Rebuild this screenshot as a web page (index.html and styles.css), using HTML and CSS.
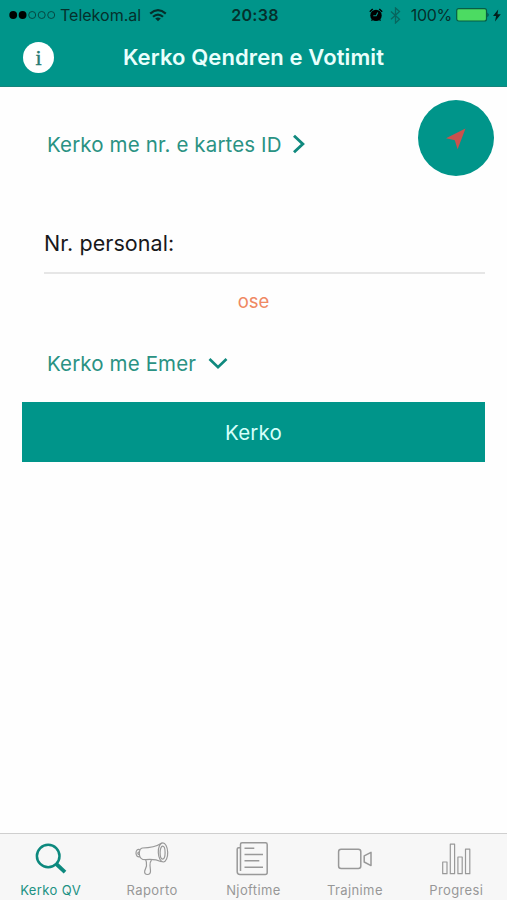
FILE: index.html
```html
<!DOCTYPE html>
<html lang="sq">
<head>
<meta charset="utf-8">
<title>Kerko Qendren e Votimit</title>
<link rel="stylesheet" href="styles.css">
</head>
<body>
<div class="app">
  <header class="header">
    <div class="status">
      <div class="status-left">
        <svg class="signal" width="47" height="10" viewBox="0 0 47 10"><circle cx="4.2" cy="5" r="3.9"/><circle cx="13.6" cy="5" r="3.9"/><g fill="none" stroke="#063f3a" stroke-width=".9"><circle cx="23.2" cy="5" r="3.5"/><circle cx="32.7" cy="5" r="3.5"/><circle cx="42.2" cy="5" r="3.5"/></g></svg>
        <span class="carrier">Telekom.al</span>
        <svg class="wifi" width="18" height="13" viewBox="0 0 18 13"><g fill="none" stroke="#052e2a" stroke-width="2.2"><path d="M1.2 4.6Q9-2.2 16.8 4.6"/><path d="M4 7.8Q9 3.3 14 7.8"/></g><path d="M9 12.3 6.2 9.5Q9 7.3 11.8 9.5Z" fill="#052e2a"/></svg>
      </div>
      <span class="time">20:38</span>
      <div class="status-right">
        <svg width="14" height="14" viewBox="0 0 14 14"><circle cx="7" cy="7.4" r="5.7"/><path d="M.8 3.8 3.7 1M13.2 3.8 10.3 1M3.3 11.6l-.8 1M10.7 11.6l.8 1" stroke="#000" stroke-width="1.5"/><path d="M8.8 4.5 7.2 7.8H4.3" fill="none" stroke="#00958a" stroke-width="1.1"/></svg>
        <svg class="bluetooth" width="11" height="17" viewBox="0 0 11 17"><path d="M1 4.6l8.5 7.6-4 3.8V1l4 3.6L1 12.2" fill="none" stroke="#08665e" stroke-width="1.3"/></svg>
        <span class="percent">100%</span>
        <svg class="battery" width="34" height="14" viewBox="0 0 34 14"><rect x=".7" y=".7" width="29.8" height="12.3" rx="2" fill="#4cdb62" stroke="#075e45" stroke-width="1.2"/><path d="M31.5 4.5q2.1 2.3 0 4.8z" fill="#053b35"/></svg>
        <svg class="bolt" width="8" height="13" viewBox="0 0 8 13"><path d="M5.2.5 0 7h3.1L2 12.5 7.8 5.2H4.5z" fill="#03201d"/></svg>
      </div>
    </div>
    <div class="nav">
      <button class="info" aria-label="Info">i</button>
      <h1 class="title">Kerko Qendren e Votimit</h1>
    </div>
  </header>
  <main class="main">
    <div class="top-row">
      <a class="link by-id">Kerko me nr. e kartes ID
        <svg width="14" height="20" viewBox="0 0 14 20"><path d="M2 1.8 10.8 10 2 18.2" fill="none" stroke="#10897e" stroke-width="2.9"/></svg></a>
      <button class="locate" aria-label="Vendndodhja"><svg width="76" height="76" viewBox="0 0 76 76"><path d="M47.5 28.5 39.6 49.2 36.8 40.3 28 38.3Z" fill="#ca514d"/></svg></button>
    </div>
    <label class="field">Nr. personal:</label>
    <div class="or">ose</div>
    <a class="link by-name">Kerko me Emer
      <svg width="20" height="13" viewBox="0 0 20 13"><path d="M1.5 2 10 10.2 18.5 2" fill="none" stroke="#10897e" stroke-width="2.7"/></svg></a>
    <button class="submit">Kerko</button>
  </main>
  <nav class="tabs">
    <a class="tab active"><svg width="36" height="36" viewBox="0 0 36 36"><circle cx="15.2" cy="15" r="11.3" fill="none" stroke="#0d897e" stroke-width="2.5"/><path d="m23.3 23 8.7 8.2" stroke="#0d897e" stroke-width="3.8"/></svg><span>Kerko QV</span></a>
    <a class="tab"><svg width="36" height="36" viewBox="0 0 36 36"><g class="line"><ellipse cx="29" cy="11.4" rx="4.7" ry="9.6" transform="rotate(-2 29 11.4)"/><ellipse cx="28.6" cy="11.6" rx="2.5" ry="6.5"/><path d="M28 2Q20 7 8.5 7Q5.5 7.5 5.3 12Q5.2 16.8 8.5 18.3L12 18.6Q21 17.8 27.5 20.7M5.6 8.5Q2 8 2 12.3Q2.3 16.5 6 15.8M5.3 10.8Q3.7 11 3.8 12.4Q4 13.8 5.3 13.7M11.5 18.5Q13 21 12.5 25L10.7 30Q10.2 33.5 13.5 33.5Q16.5 33.5 16.5 30L16 24.5Q15.6 21.3 17.8 18.3"/></g></svg><span>Raporto</span></a>
    <a class="tab"><svg width="36" height="36" viewBox="0 0 36 36"><g class="line news"><path d="M7 1.7h23.5q1.7 0 1.7 1.7v28q0 2-2 2H5q-2.8 0-2.8-2.7V8q0-1.3 1.5-1.3H5.5V30M5.5 29V3.2q0-1.5 1.5-1.5"/><path d="M9.5 7.3h9.8M9.5 13.5H28M9.5 19.7h14.8M9.5 26.2H28"/></g></svg><span>Njoftime</span></a>
    <a class="tab"><svg width="36" height="36" viewBox="0 0 36 36"><g class="line video"><rect x="1.6" y="8.2" width="22.2" height="19.3" rx="2.5"/><path d="M34 11.3v13.3l-6.8-3.6v-6.1z"/></g></svg><span>Trajnime</span></a>
    <a class="tab"><svg width="36" height="36" viewBox="0 0 36 36"><g class="line chart"><rect x="4.7" y="21" width="4.3" height="11.7"/><rect x="12.3" y="3.2" width="4.3" height="29.5"/><rect x="19.9" y="16" width="4.3" height="16.7"/><rect x="27.5" y="8.2" width="4.3" height="24.5"/></g></svg><span>Progresi</span></a>
  </nav>
</div>
</body>
</html>
```
FILE: styles.css
```css
* { box-sizing: border-box; }
body { margin: 0; background: #fefefe; font-family: Inter, "Liberation Sans", sans-serif; }
button { border: 0; padding: 0; font: inherit; }
svg { display: block; flex: none; }
.app { width: 507px; height: 900px; display: flex; flex-direction: column; }
.header { height: 87px; flex: none; background: #00958a; border-bottom: 1px solid #16857c; }
.status { height: 30px; display: grid; grid-template-columns: 1fr auto 1fr; align-items: center; padding: 0 6px 0 9px; color: #05302c; font-size: 16px; line-height: 20px; }
.status-left, .status-right { display: flex; align-items: center; }
.status-right { justify-content: flex-end; }
.carrier { margin-left: 4px; letter-spacing: 0; }
.wifi { margin-left: 8px; }
.time { font-weight: 600; letter-spacing: .3px; }
.bluetooth { margin-left: 7px; }
.percent { margin-left: 10px; letter-spacing: -.3px; }
.battery { margin-left: 4px; }
.bolt { margin-left: 3px; }
.nav { height: 54px; display: grid; grid-template-columns: 54px 1fr 54px; align-items: center; }
.info { width: 31px; height: 31px; margin-left: 23px; border-radius: 50%; background: #fff; color: #277b73; font: 22px/29px "Liberation Serif", serif; -webkit-text-stroke: .4px #277b73; }
.title { margin: 0; text-align: center; color: #e9fffc; font-size: 22px; line-height: 28px; font-weight: 600; letter-spacing: .11px; white-space: nowrap; }
.main { flex: 1; padding: 13px 22px 0; }
.top-row { height: 76px; display: flex; justify-content: space-between; align-items: center; margin-right: -9px; }
.link { display: flex; align-items: center; margin-left: 25px; color: #2a9283; font-size: 20.5px; line-height: 28px; letter-spacing: .13px; white-space: nowrap; }
.link svg { position: relative; top: -1px; }
.by-id { gap: 10px; margin-top: 14px; }
.locate { width: 76px; height: 76px; border-radius: 50%; background: #00958a; }
.field { display: block; height: 63px; margin: 35px 0 0 22px; padding-top: 17px; border-bottom: 2px solid #e6e6e6; color: #18181a; font-size: 21.5px; line-height: 30px; letter-spacing: .06px; }
.or { margin-top: 14px; text-align: center; color: #ef8862; font-size: 18.5px; line-height: 26px; }
.by-name { margin-top: 36px; gap: 12px; }
.submit { display: block; width: 463px; height: 60px; margin-top: 24px; background: #00958a; color: #d5fffa; font-size: 20.5px; letter-spacing: .2px; text-align: center; }
.tabs { height: 67px; flex: none; display: grid; grid-template-columns: repeat(5, 1fr); background: #f7f7f7; border-top: 1px solid #cfcfcf; }
.tab { display: flex; flex-direction: column; align-items: center; padding-top: 7px; color: #979797; font-size: 13px; line-height: 16px; letter-spacing: .4px; }
.tab span { margin-top: 5px; }
.active { color: #209183; }
.line { fill: none; stroke: #999; stroke-width: 1.2; stroke-linejoin: round; }
.news, .video { stroke-width: 1.5; }
```
